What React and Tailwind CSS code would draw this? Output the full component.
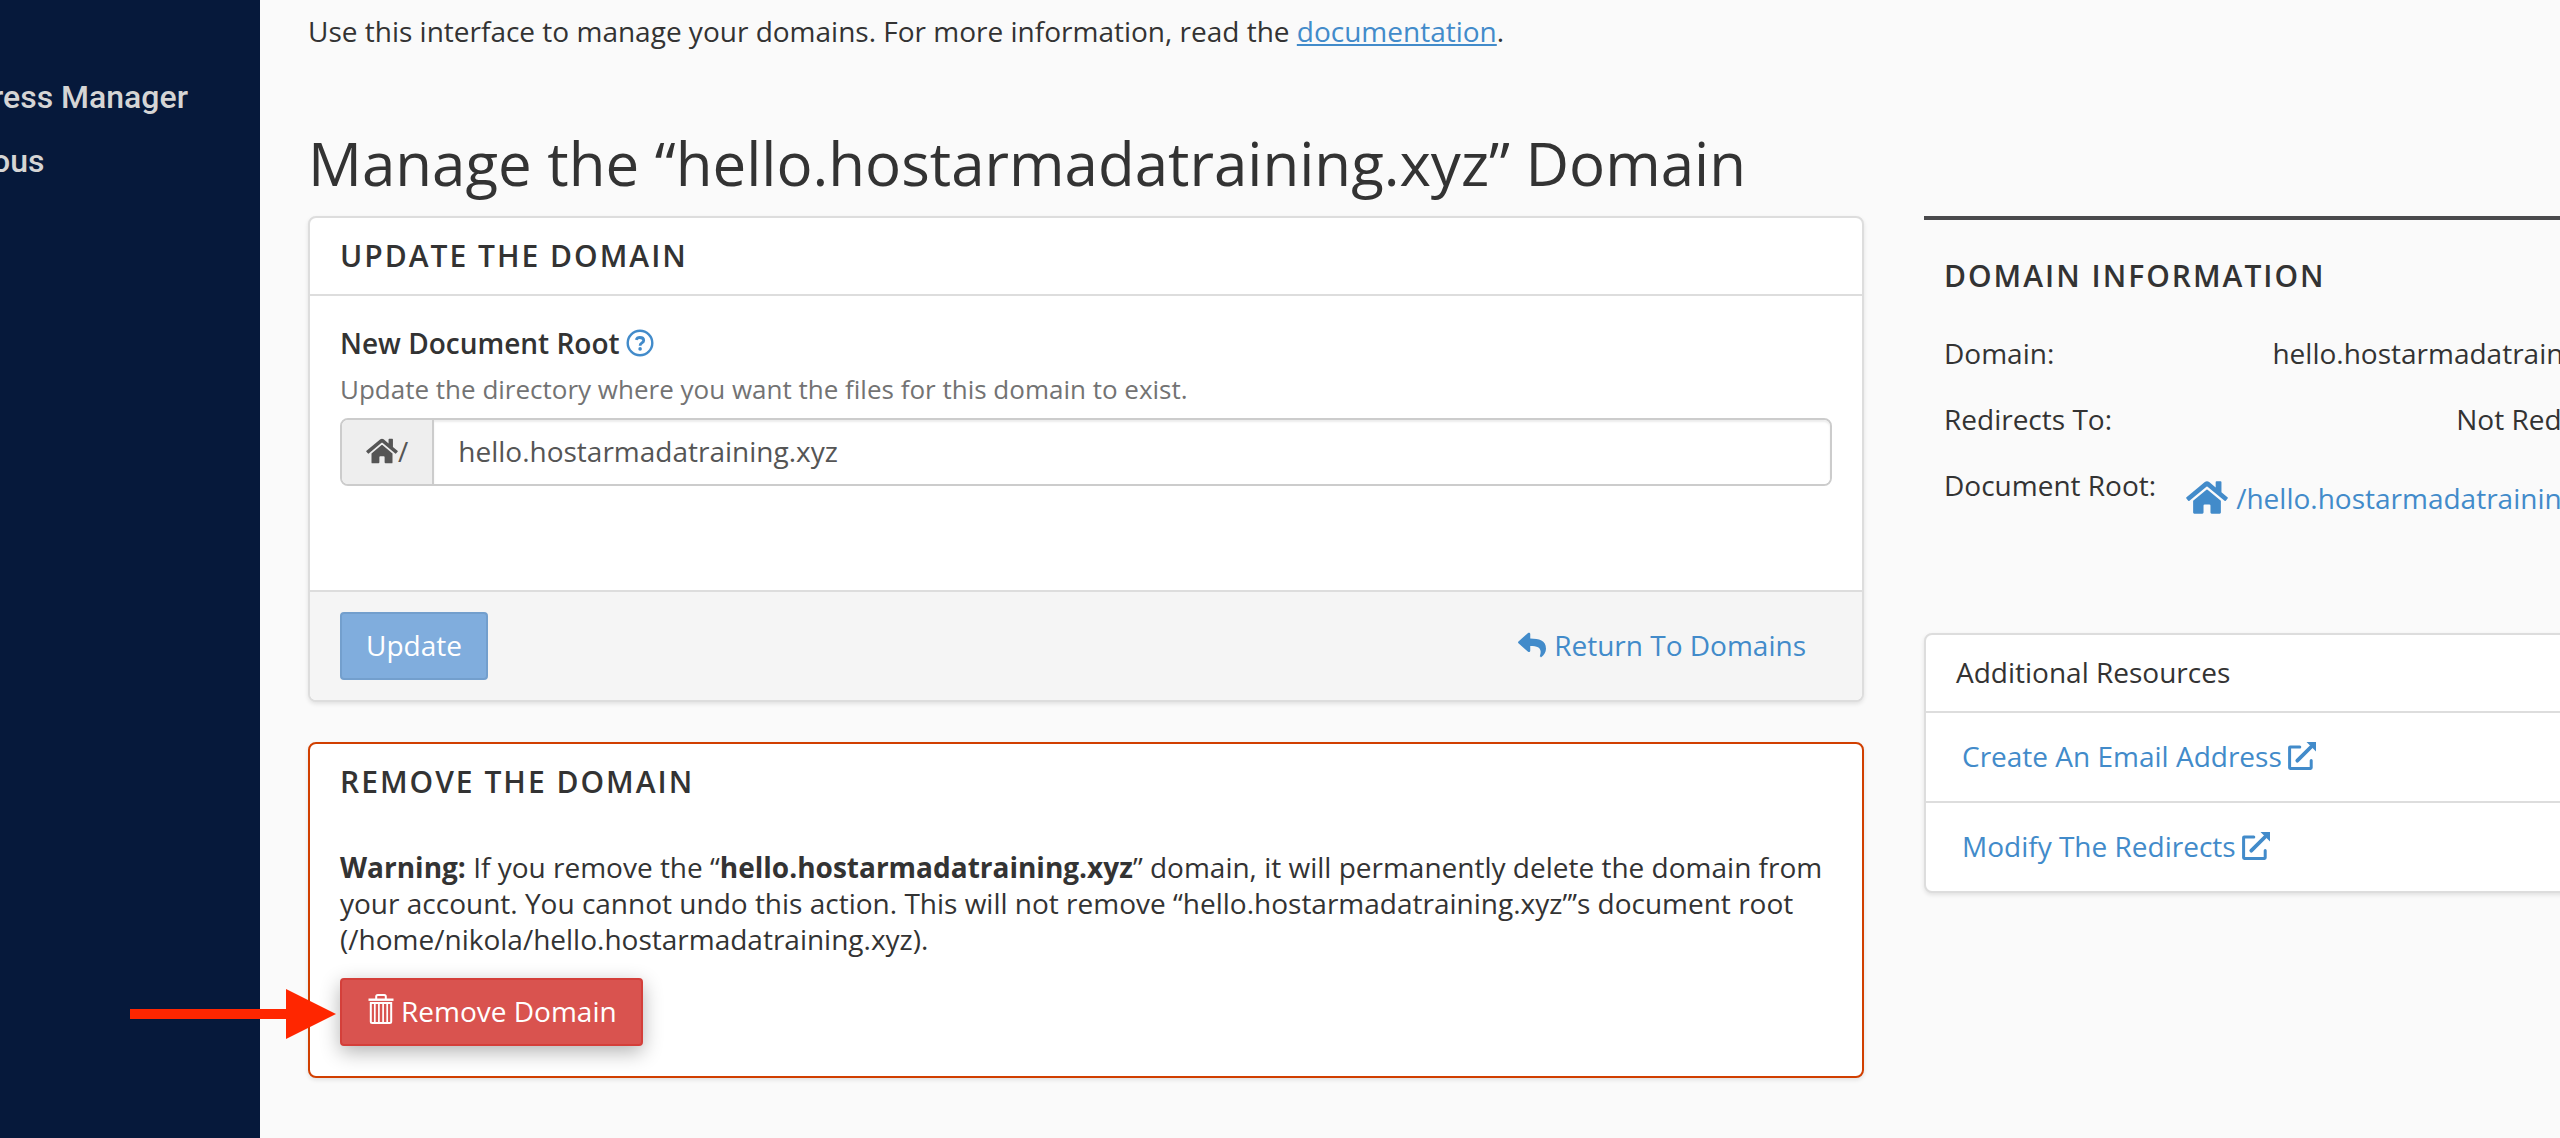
import { useState } from 'react';
import { FaHome, FaReply } from 'react-icons/fa';

const navItems = ['ress Manager', 'ous']

const domain = 'hello.hostarmadatraining.xyz'

const HelpIcon = ({ className }) => (
  <svg viewBox="0 0 28 28" className={className} fill="none" stroke="currentColor" aria-hidden="true">
    <circle cx="14" cy="14" r="12.3" strokeWidth="2.4" />
    <path d="M10.2 10.9C10.8 9.2 12 8.5 13.8 8.5C16 8.5 17.7 9.7 17.7 11.5C17.7 14 14.1 14 14.1 16.7" strokeWidth="2.8" />
    <circle cx="14.1" cy="19.9" r="1.8" fill="currentColor" stroke="none" />
  </svg>
)

const TrashIcon = ({ className }) => (
  <svg viewBox="0 0 26 30" className={className} fill="none" stroke="currentColor" aria-hidden="true">
    <path d="M0.5 5.7H25.5" strokeWidth="2.4" />
    <path d="M8.2 5V2.5Q8.2 1 9.7 1H16.3Q17.8 1 17.8 2.5V5" strokeWidth="2" />
    <path d="M2.8 9H23.2V27.5Q23.2 29 21.7 29H4.3Q2.8 29 2.8 27.5Z" strokeWidth="2" />
    <path d="M6.8 9V29M10.9 9V29M15.1 9V29M19.2 9V29" strokeWidth="1.7" />
  </svg>
)

const ExternalIcon = ({ className }) => (
  <svg viewBox="0 0 28 28" className={className} fill="none" stroke="currentColor" aria-hidden="true">
    <path d="M11.8 4.9H2.2Q1.6 4.9 1.6 5.5V25.800Q1.6 26.400 2.200 26.400H22.600Q23.200 26.400 23.200 25.800V18.400" strokeWidth="3" strokeLinecap="round" />
    <path d="M9.300 18.700 23 5" strokeWidth="3.800" strokeLinecap="round" />
    <path d="M18.500 0H28V9.500Z" fill="currentColor" stroke="none" />
  </svg>
)

const App = () => {
  const [root, setRoot] = useState(domain)

  return (
    <div className="relative flex min-h-screen overflow-hidden bg-[#fafafa] font-['Open_Sans',sans-serif] text-[28px] leading-9 text-[#333333]">
      {/* Sidebar */}
      <nav className="w-[260px] shrink-0 overflow-hidden bg-[#06193b] pt-[79px] font-['Roboto',sans-serif] text-[32px] font-medium text-[#d5d5d5]">
        <ul className="-ml-2 flex flex-col gap-7">
          {navItems.map((item) => (
            <li key={item}>
              <a href="#" className="block whitespace-nowrap leading-9">{item}</a>
            </li>
          ))}
        </ul>
      </nav>

      <main className="min-w-0 flex-1 pt-[13px] pl-12">
        <p>
          Use this interface to manage your domains. For more information, read the{' '}
          <a href="#" className="text-[#428bca] underline">documentation</a>.
        </p>
        <h1 className="mt-[71px] text-[60px] leading-[86px]">Manage the “{domain}” Domain</h1>

        {/* The info column runs past the right edge of the window */}
        <div className="mt-2.5 flex w-[calc(100%+112px)] items-start gap-[60px]">
          <div className="flex min-w-0 flex-1 flex-col gap-10">
            {/* Update panel */}
            <section className="overflow-hidden rounded-lg border-2 border-[#dddddd] bg-white shadow-[0_2px_4px_rgba(0,0,0,0.1)]">
              <h2 className="border-b-2 border-[#dddddd] px-[30px] py-5 text-[30px] font-semibold tracking-[2px]">UPDATE THE DOMAIN</h2>
              <div className="px-[30px] pt-[29px] pb-[104px]">
                <div className="flex items-center gap-1.5">
                  <label htmlFor="doc-root" className="font-semibold">New Document Root</label>
                  <button type="button" aria-label="Help" className="text-[#428bca]">
                    <HelpIcon className="size-7" />
                  </button>
                </div>
                <p className="mt-2.5 text-[26px] text-[#737373]">
                  Update the directory where you want the files for this domain to exist.
                </p>
                <div className="mt-[11px] flex h-[68px] rounded-lg border-2 border-[#cccccc] text-[#555555]">
                  <span className="flex items-center rounded-l-md border-r-2 border-[#cccccc] bg-[#eeeeee] px-6 pb-0.5">
                    <FaHome className="h-7 w-8" />/
                  </span>
                  <input
                    id="doc-root"
                    type="text"
                    value={root}
                    onChange={(e) => setRoot(e.target.value)}
                    className="min-w-0 flex-1 rounded-r-md bg-white px-6 pb-0.5 shadow-[inset_0_2px_2px_rgba(0,0,0,0.075)] outline-none"
                  />
                </div>
              </div>
              <div className="flex items-center justify-between border-t-2 border-[#dddddd] bg-[#f5f5f5] py-5 pr-14 pl-[30px]">
                <button type="button" className="h-[68px] rounded border-2 border-[#739fcd] bg-[#80addd] px-6 pb-0.5 text-white">Update</button>
                <a href="#" className="flex items-center gap-2 pb-0.5 text-[#428bca]">
                  <FaReply className="size-7" />
                  Return To Domains
                </a>
              </div>
            </section>

            {/* Remove panel */}
            <section className="rounded-lg border-2 border-[#d13f00] bg-white px-[30px] pt-5 pb-[30px] shadow-[0_2px_4px_rgba(0,0,0,0.1)]">
              <h2 className="text-[30px] font-semibold tracking-[2px]">REMOVE THE DOMAIN</h2>
              <p className="mt-[49px] mb-[21px]">
                <strong>Warning:</strong> If you remove the “<strong>{domain}</strong>” domain, it will permanently delete
                the domain from your account. You cannot undo this action. This will not remove “{domain}”’s document
                root (/home/nikola/{domain}).
              </p>
              <button type="button" className="flex h-[68px] items-center gap-[7px] rounded border-2 border-[#d43f3a] bg-[#d9534f] pr-6 pb-0.5 pl-[26px] text-white shadow-[0_6px_20px_rgba(0,0,0,0.3)]">
                <TrashIcon className="mb-1 h-[30px] w-[26px]" />
                Remove Domain
              </button>
            </section>
          </div>

          {/* Info column */}
          <aside className="w-[748px] shrink-0">
            <section className="border-t-4 border-[#4a4a4c] px-5 pt-[38px]">
              <h2 className="text-[30px] font-semibold tracking-[2px]">DOMAIN INFORMATION</h2>
              <dl className="mt-[41px] flex flex-col gap-[30px]">
                <div className="flex justify-between">
                  <dt>Domain:</dt>
                  <dd>{domain}</dd>
                </div>
                <div className="flex justify-between">
                  <dt>Redirects To:</dt>
                  <dd>Not Redirected</dd>
                </div>
                <div className="flex justify-between">
                  <dt>Document Root:</dt>
                  <dd className="pt-3 pr-[26px]">
                    <a href="#" className="flex items-center gap-2 text-[#428bca]">
                      <FaHome className="h-[37px] w-[42px]" />/{domain}
                    </a>
                  </dd>
                </div>
              </dl>
            </section>

            <section className="mt-[117px] rounded-lg border-2 border-[#dddddd] bg-white shadow-[0_2px_4px_rgba(0,0,0,0.1)]">
              <h2 className="px-[30px] pt-[19px] pb-[21px]">Additional Resources</h2>
              <ul>
                {['Create An Email Address', 'Modify The Redirects'].map((text) => (
                  <li key={text} className="border-t-2 border-[#dddddd] px-9 pt-[25px] pb-[27px]">
                    <a href="#" className="flex items-center gap-1.5 text-[#428bca]">
                      {text}
                      <ExternalIcon className="size-7" />
                    </a>
                  </li>
                ))}
              </ul>
            </section>
          </aside>
        </div>
      </main>

      {/* Callout arrow */}
      <svg viewBox="0 0 206 50" className="absolute top-[989px] left-[130px] w-[206px]" fill="#ff2600" aria-hidden="true">
        <path d="M0 20H156V0L206 25L156 50V30H0Z" />
      </svg>
    </div>
  );
}

export default App
